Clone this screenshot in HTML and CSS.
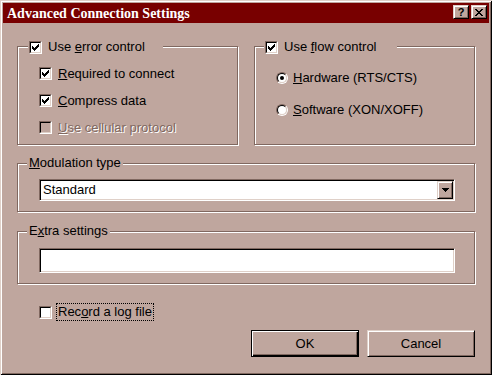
FILE: index.html
```html
<!DOCTYPE html>
<html lang="en">
<head>
  <meta charset="UTF-8">
  <title>Advanced Connection Settings</title>
  <link rel="stylesheet" href="styles.css">
</head>
<body>

  <div class="window">
    <div class="titlebar">
      <span class="title">Advanced Connection Settings</span>
      <div class="caption-buttons">
        <span class="caption-btn help">?</span>
        <span class="caption-btn">
          <svg width="8" height="7" viewBox="0 0 8 7" shape-rendering="crispEdges">
            <path d="M0 0h2v1h-2z M6 0h2v1h-2z M1 1h2v1h-2z M5 1h2v1h-2z M2 2h4v1h-4z M3 3h2v1h-2z M2 4h4v1h-4z M1 5h2v1h-2z M5 5h2v1h-2z M0 6h2v1h-2z M6 6h2v1h-2z" fill="#000"/>
          </svg>
        </span>
      </div>
    </div>

    <div class="dialog">
      <div class="top-row">
        <!-- Controle de erro -->
        <div class="group group-error">
          <div class="legend legend-check">
            <span class="check"><span class="check-box"><svg class="tick" width="7" height="7" viewBox="0 0 7 7" shape-rendering="crispEdges"><path d="M6 0h1v1h-1z M5 1h2v1h-2z M0 2h1v1h-1z M4 2h3v1h-3z M0 3h2v1h-2z M3 3h3v1h-3z M0 4h5v1h-5z M1 5h3v1h-3z M2 6h1v1h-1z" fill="#000"/></svg></span></span>
            <span class="label">Use <u>e</u>rror control</span>
          </div>
          <div class="option-list">
            <div class="option">
              <span class="check"><span class="check-box"><svg class="tick" width="7" height="7" viewBox="0 0 7 7" shape-rendering="crispEdges"><path d="M6 0h1v1h-1z M5 1h2v1h-2z M0 2h1v1h-1z M4 2h3v1h-3z M0 3h2v1h-2z M3 3h3v1h-3z M0 4h5v1h-5z M1 5h3v1h-3z M2 6h1v1h-1z" fill="#000"/></svg></span></span>
              <span class="label"><u>R</u>equired to connect</span>
            </div>
            <div class="option">
              <span class="check"><span class="check-box"><svg class="tick" width="7" height="7" viewBox="0 0 7 7" shape-rendering="crispEdges"><path d="M6 0h1v1h-1z M5 1h2v1h-2z M0 2h1v1h-1z M4 2h3v1h-3z M0 3h2v1h-2z M3 3h3v1h-3z M0 4h5v1h-5z M1 5h3v1h-3z M2 6h1v1h-1z" fill="#000"/></svg></span></span>
              <span class="label"><u>C</u>ompress data</span>
            </div>
            <div class="option disabled">
              <span class="check"><span class="check-box"></span></span>
              <span class="label"><u>U</u>se cellular protocol</span>
            </div>
          </div>
        </div>

        <!-- Controle de fluxo -->
        <div class="group group-flow">
          <div class="legend legend-check">
            <span class="check"><span class="check-box"><svg class="tick" width="7" height="7" viewBox="0 0 7 7" shape-rendering="crispEdges"><path d="M6 0h1v1h-1z M5 1h2v1h-2z M0 2h1v1h-1z M4 2h3v1h-3z M0 3h2v1h-2z M3 3h3v1h-3z M0 4h5v1h-5z M1 5h3v1h-3z M2 6h1v1h-1z" fill="#000"/></svg></span></span>
            <span class="label">Use <u>f</u>low control</span>
          </div>
          <div class="radio-list">
            <div class="option">
              <span class="radio"><span class="radio-inner"><span class="radio-dot"></span></span></span>
              <span class="label label-radio"><u>H</u>ardware (RTS/CTS)</span>
            </div>
            <div class="option">
              <span class="radio"><span class="radio-inner"></span></span>
              <span class="label label-radio"><u>S</u>oftware (XON/XOFF)</span>
            </div>
          </div>
        </div>
      </div>

      <div class="group group-modulation">
        <div class="legend"><u>M</u>odulation type</div>
        <div class="combo">
          <span class="combo-value">Standard</span>
          <span class="combo-button">
            <svg width="7" height="4" viewBox="0 0 7 4" shape-rendering="crispEdges">
              <path d="M0 0h7v1h-7z M1 1h5v1h-5z M2 2h3v1h-3z M3 3h1v1h-1z" fill="#000"/>
            </svg>
          </span>
        </div>
      </div>

      <div class="group group-extra">
        <div class="legend">E<u>x</u>tra settings</div>
        <div class="field"></div>
      </div>

      <div class="log-row option">
        <span class="check"><span class="check-box"></span></span>
        <span class="label focus">Rec<u>o</u>rd a log file</span>
      </div>

      <div class="button-row">
        <button class="btn btn-default">OK</button>
        <button class="btn">Cancel</button>
      </div>
    </div>
  </div>

</body>
</html>
```

FILE: styles.css
```css
/* Reset */
* {
  margin: 0;
  padding: 0;
  box-sizing: border-box;
}

body {
  font-family: "Liberation Sans", Arial, sans-serif;
  font-size: 13px;
  line-height: 16px;
  color: #000;
  background: #bfa69e;
}

.window {
  width: 492px;
  height: 375px;
  padding: 3px;
  background: #bfa69e;
  box-shadow: inset 1px 1px #dfd0c8, inset -1px -1px #000, inset 2px 2px #fff, inset -2px -2px #806860;
}

/* Barra de titulo */
.titlebar {
  height: 20px;
  background: #780000;
  display: flex;
  justify-content: space-between;
  padding-left: 4px;
}

.title {
  font-family: "Liberation Serif", "Times New Roman", serif;
  font-weight: bold;
  font-size: 14px;
  line-height: 19px;
  color: #fff;
  padding-top: 1px;
}

.caption-buttons {
  display: flex;
  gap: 2px;
  margin-top: 2px;
  margin-right: 2px;
}

.caption-btn {
  width: 16px;
  height: 14px;
  background: #bfa69e;
  border: 1px solid;
  border-color: #dfd0c8 #000 #000 #dfd0c8;
  box-shadow: inset 1px 1px #fff, inset -1px -1px #806860;
  display: flex;
  align-items: center;
  justify-content: center;
}

.help {
  font-weight: bold;
  font-size: 11px;
  line-height: 12px;
}

/* Corpo do dialogo */
.dialog {
  padding: 23px 14px 0 14px;
}

.top-row {
  display: flex;
  gap: 16px;
}

.group {
  position: relative;
  border: 1px solid #806860;
  box-shadow: inset 1px 1px #fff, 1px 1px #fff;
}

.group-error, .group-flow {
  flex: 1;
  height: 99px;
}

.legend {
  position: absolute;
  top: -10px;
  left: 9px;
  height: 18px;
  padding: 0 2px;
  background: #bfa69e;
  display: flex;
  align-items: center;
}

.legend-check {
  top: -9px;
  left: 10px;
  padding-left: 1px;
}

.group-error .legend {
  padding-right: 16px;
}

.group-flow .legend {
  left: 9px;
  padding-right: 18px;
}

.option {
  display: flex;
  align-items: center;
}

.option-list {
  padding: 13px 0 0 21px;
}

.option-list .option {
  height: 27px;
}

.radio-list {
  padding: 15px 0 0 21px;
}

.radio-list .option {
  height: 32px;
}

.label {
  margin-left: 4px;
  padding: 0 1px;
  border: 1px solid transparent;
  white-space: nowrap;
}

.label-radio {
  margin-left: 3px;
}

.focus {
  border: 1px dotted #000;
}

.disabled .label {
  color: #806860;
  text-shadow: 1px 1px #fff;
}

/* Caixa de selecao */
.check {
  width: 13px;
  height: 13px;
  flex: none;
  border: 1px solid;
  border-color: #806860 #fff #fff #806860;
}

.check-box {
  display: flex;
  width: 100%;
  height: 100%;
  border: 1px solid;
  border-color: #000 #dfd0c8 #dfd0c8 #000;
  background: #fff;
  padding: 1px;
}

.disabled .check-box {
  background: #bfa69e;
}

.tick {
  display: block;
}

/* Botao de radio */
.radio {
  width: 12px;
  height: 12px;
  flex: none;
  border-radius: 50%;
  border: 1px solid;
  border-color: #806860 #fff #fff #806860;
}

.radio-inner {
  display: flex;
  align-items: center;
  justify-content: center;
  width: 100%;
  height: 100%;
  border-radius: 50%;
  border: 1px solid;
  border-color: #000 #dfd0c8 #dfd0c8 #000;
  background: #fff;
}

.radio-dot {
  width: 4px;
  height: 4px;
  border-radius: 50%;
  background: #000;
}

/* Tipo de modulacao */
.group-modulation {
  margin-top: 18px;
  height: 49px;
  padding: 15px 19px 0 21px;
}

.combo {
  height: 22px;
  display: flex;
  justify-content: space-between;
  background: #fff;
  border: 1px solid;
  border-color: #806860 #fff #fff #806860;
  box-shadow: inset 1px 1px #000, inset -1px -1px #dfd0c8;
  padding: 1px;
}

.combo-value {
  padding-left: 2px;
  line-height: 18px;
}

.combo-button {
  width: 16px;
  height: 18px;
  background: #bfa69e;
  border: 1px solid;
  border-color: #dfd0c8 #000 #000 #dfd0c8;
  box-shadow: inset 1px 1px #fff, inset -1px -1px #806860;
  display: flex;
  align-items: center;
  justify-content: center;
}

/* Configuracoes extras */
.group-extra {
  margin-top: 19px;
  height: 53px;
  padding: 16px 19px 0 21px;
}

.field {
  height: 25px;
  background: #fff;
  border: 1px solid;
  border-color: #806860 #fff #fff #806860;
  box-shadow: inset 1px 1px #000, inset -1px -1px #dfd0c8;
}

.log-row {
  margin-top: 19px;
  padding-left: 22px;
}

.log-row .label {
  line-height: 16px;
}

/* Botoes */
.button-row {
  display: flex;
  justify-content: flex-end;
  gap: 8px;
  margin-top: 9px;
}

.btn {
  width: 108px;
  height: 27px;
  font-family: "Liberation Sans", Arial, sans-serif;
  font-size: 13px;
  color: #000;
  background: #bfa69e;
  border: 1px solid;
  border-color: #dfd0c8 #000 #000 #dfd0c8;
  box-shadow: inset 1px 1px #fff, inset -1px -1px #806860;
}

.btn-default {
  border-color: #000;
  box-shadow: inset 1px 1px #fff, inset -1px -1px #000, inset -2px -2px #806860;
}
```
